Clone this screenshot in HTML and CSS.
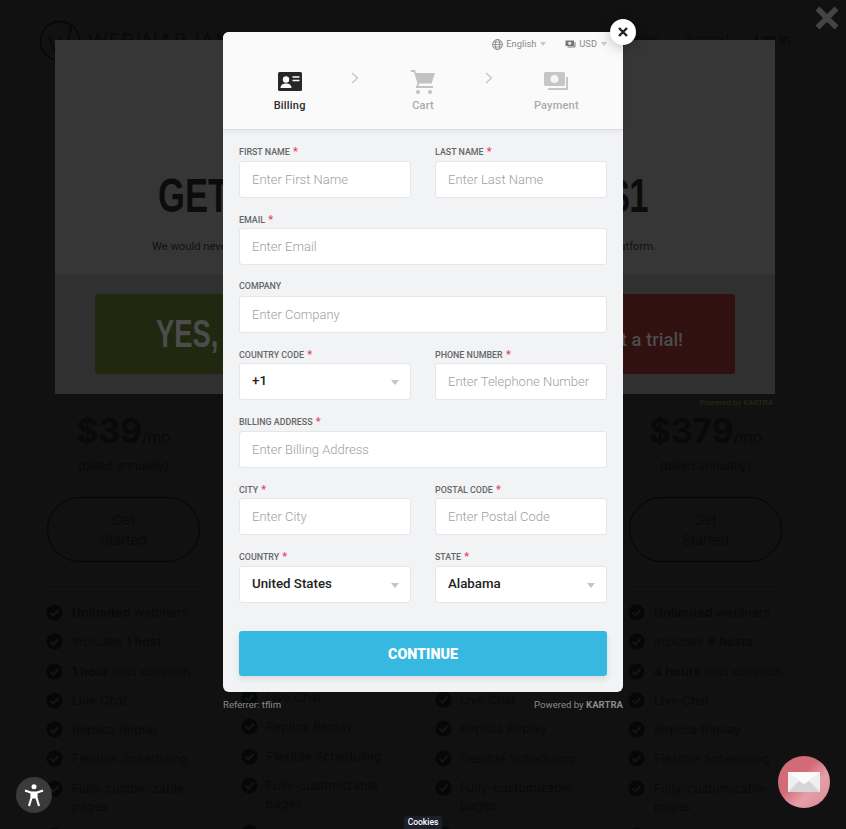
FILE: index.html
```html
<!DOCTYPE html>
<html lang="en">
<head>
  <meta charset="UTF-8" />
  <meta name="viewport" content="width=device-width, initial-scale=1.0"/>
  <title>Checkout</title>
  <link rel="stylesheet" href="styles.css">
</head>
<body>
  <svg class="defs" width="0" height="0">
    <symbol id="check" viewBox="0 0 18 18">
      <circle cx="9" cy="9" r="8.5" fill="#060806"/>
      <path d="M4.8 9.2l3 3 5.4-6" fill="none" stroke="#141614" stroke-width="2.2"/>
    </symbol>
  </svg>

  <div class="page">
    <header class="site-head">
      <svg class="site-logo" width="42" height="42" viewBox="0 0 42 42">
        <circle cx="21" cy="21" r="19.5" fill="none" stroke="#070707" stroke-width="1.6"/>
        <path d="M10 17l6 15 6-13 5 13 5-26" fill="none" stroke="#070707" stroke-width="1.6"/>
      </svg>
      <div class="site-name">WEBINAR JAM</div>
      <nav class="site-nav">
        <span>Examples</span>
        <span>Support</span>
        <b>Log in</b>
      </nav>
    </header>

    <section class="plans">
      <div class="plan plan-outer">
        <div class="price"><b>$39</b>/mo</div>
        <div class="billed">(billed annually)</div>
        <div class="get-started">Get<br>Started</div>
        <hr>
        <ul>
          <li><svg><use href="#check"/></svg><span><b>Unlimited</b> webinars</span></li>
          <li><svg><use href="#check"/></svg><span>Includes <b>1 host</b></span></li>
          <li><svg><use href="#check"/></svg><span><b>1 hour</b> max duration</span></li>
          <li><svg><use href="#check"/></svg><span>Live Chat</span></li>
          <li><svg><use href="#check"/></svg><span>Replica Replay</span></li>
          <li><svg><use href="#check"/></svg><span>Flexible Scheduling</span></li>
          <li><svg><use href="#check"/></svg><span>Fully-customizable pages</span></li>
          <li><svg><use href="#check"/></svg></li>
        </ul>
      </div>
      <div class="plan plan-covered plan-second">
        <ul>
          <li><svg><use href="#check"/></svg><span>Live Chat</span></li>
          <li><svg><use href="#check"/></svg><span>Replica Replay</span></li>
          <li><svg><use href="#check"/></svg><span>Flexible Scheduling</span></li>
          <li><svg><use href="#check"/></svg><span>Fully-customizable pages</span></li>
          <li><svg><use href="#check"/></svg></li>
        </ul>
      </div>
      <div class="plan plan-covered">
        <ul>
          <li><svg><use href="#check"/></svg><span>Live Chat</span></li>
          <li><svg><use href="#check"/></svg><span>Replica Replay</span></li>
          <li><svg><use href="#check"/></svg><span>Flexible Scheduling</span></li>
          <li><svg><use href="#check"/></svg><span>Fully-customizable pages</span></li>
          <li><svg><use href="#check"/></svg></li>
        </ul>
      </div>
      <div class="plan plan-outer">
        <div class="price"><b>$379</b>/mo</div>
        <div class="billed">(billed annually)</div>
        <div class="get-started">Get<br>Started</div>
        <hr>
        <ul>
          <li><svg><use href="#check"/></svg><span><b>Unlimited</b> webinars</span></li>
          <li><svg><use href="#check"/></svg><span>Includes <b>6 hosts</b></span></li>
          <li><svg><use href="#check"/></svg><span><b>4 hours</b> max duration</span></li>
          <li><svg><use href="#check"/></svg><span>Live Chat</span></li>
          <li><svg><use href="#check"/></svg><span>Replica Replay</span></li>
          <li><svg><use href="#check"/></svg><span>Flexible Scheduling</span></li>
          <li><svg><use href="#check"/></svg><span>Fully-customizable pages</span></li>
          <li><svg><use href="#check"/></svg></li>
        </ul>
      </div>
    </section>
  </div>

  <!-- first popup, sits behind the checkout -->
  <div class="offer">
    <div class="offer-top">
      <div class="offer-title"><span class="squeeze-left">GET</span><span class="squeeze-right">$1</span></div>
      <div class="offer-sub"><span>We would never</span><span>platform.</span></div>
    </div>
    <div class="offer-actions">
      <div class="offer-yes"><span class="squeeze-left">YES,</span></div>
      <div class="offer-no">Not a trial!</div>
    </div>
  </div>
  <div class="offer-credit">Powered by KARTRA</div>

  <svg class="page-close" width="24" height="24" viewBox="0 0 24 24">
    <path d="M2.5 2.5l19 19M21.5 2.5l-19 19" stroke="#444" stroke-width="5.5"/>
  </svg>

  <!-- checkout modal -->
  <div class="modal">
    <div class="modal-head">
      <div class="switches">
        <span class="switch">
          <svg width="11" height="11" viewBox="0 0 10 10" fill="none" stroke="#777" stroke-width="0.7">
            <circle cx="5" cy="5" r="4.5"/>
            <ellipse cx="5" cy="5" rx="2" ry="4.5"/>
            <path d="M0.5 5h9M1.2 2.8h7.6M1.2 7.2h7.6"/>
          </svg>
          English<i class="caret"></i>
        </span>
        <span class="switch">
          <svg width="11" height="8" viewBox="0 0 10 8">
            <rect x="0" y="0.5" width="8.5" height="5.5" fill="#777"/>
            <circle cx="4.2" cy="3.2" r="1.5" fill="#eee"/>
            <path d="M9.5 2v5H2" fill="none" stroke="#777"/>
          </svg>
          USD<i class="caret"></i>
        </span>
      </div>
      <div class="steps">
        <div class="step step-on">
          <svg width="24" height="20" viewBox="0 0 24 20">
            <rect width="24" height="19" rx="1.5" fill="#272727"/>
            <circle cx="8" cy="7.5" r="3.2" fill="#fafafa"/>
            <path d="M2.5 16c0-3.4 2.6-4.6 5.5-4.6s5.5 1.2 5.5 4.6z" fill="#fafafa"/>
            <path d="M14.5 5h7M14.5 8.5h7" stroke="#fafafa" stroke-width="1.6"/>
          </svg>
          <span>Billing</span>
        </div>
        <svg class="chevron" width="8" height="12" viewBox="0 0 8 12"><path d="M1 1l5.5 5L1 11" fill="none" stroke="#c4c4c4" stroke-width="1.3"/></svg>
        <div class="step">
          <svg width="24" height="24" viewBox="0 0 24 24">
            <path d="M0 0h4l1 3h19l-3.5 10.5H8.200l-1 2.500H22v2H4.500l2-4.800L3 2H0z" fill="#c2c2c2"/>
            <circle cx="7" cy="22" r="2" fill="#c2c2c2"/>
            <circle cx="19" cy="22" r="2" fill="#c2c2c2"/>
          </svg>
          <span>Cart</span>
        </div>
        <svg class="chevron" width="8" height="12" viewBox="0 0 8 12"><path d="M1 1l5.5 5L1 11" fill="none" stroke="#c4c4c4" stroke-width="1.3"/></svg>
        <div class="step">
          <svg width="24" height="20" viewBox="0 0 24 20">
            <rect width="21" height="14" rx="1.500" fill="#c6c6c6"/>
            <circle cx="10.500" cy="7" r="4" fill="#f5f5f5"/>
            <path d="M23 5v12H4" fill="none" stroke="#c6c6c6" stroke-width="2"/>
          </svg>
          <span>Payment</span>
        </div>
      </div>
    </div>

    <form class="billing-form">
      <div class="field">
        <label>First Name <em>*</em></label>
        <input type="text" placeholder="Enter First Name">
      </div>
      <div class="field">
        <label>Last Name <em>*</em></label>
        <input type="text" placeholder="Enter Last Name">
      </div>
      <div class="field field-wide">
        <label>Email <em>*</em></label>
        <input type="text" placeholder="Enter Email">
      </div>
      <div class="field field-wide">
        <label>Company</label>
        <input type="text" placeholder="Enter Company">
      </div>
      <div class="field">
        <label>Country Code <em>*</em></label>
        <div class="select">+1</div>
      </div>
      <div class="field">
        <label>Phone Number <em>*</em></label>
        <input type="text" placeholder="Enter Telephone Number">
      </div>
      <div class="field field-wide">
        <label>Billing Address <em>*</em></label>
        <input type="text" placeholder="Enter Billing Address">
      </div>
      <div class="field">
        <label>City <em>*</em></label>
        <input type="text" placeholder="Enter City">
      </div>
      <div class="field">
        <label>Postal Code <em>*</em></label>
        <input type="text" placeholder="Enter Postal Code">
      </div>
      <div class="field">
        <label>Country <em>*</em></label>
        <div class="select">United States</div>
      </div>
      <div class="field">
        <label>State <em>*</em></label>
        <div class="select">Alabama</div>
      </div>
      <button type="button" class="continue">CONTINUE</button>
    </form>

    <div class="modal-close">
      <svg width="10" height="10" viewBox="0 0 10 10"><path d="M1 1l8 8M9 1l-8 8" stroke="#222" stroke-width="2.400"/></svg>
    </div>
  </div>

  <div class="modal-foot">
    <span>Referrer: tflim</span>
    <span>Powered by <b>KARTRA</b></span>
  </div>

  <div class="a11y">
    <svg width="20" height="23" viewBox="0 0 20 23">
      <circle cx="10" cy="2.800" r="2.500" fill="#fff"/>
      <path d="M1 6.500l6.500 2.200v5L5 22M19 6.500l-6.500 2.200v5L15 22" fill="none" stroke="#fff" stroke-width="2.200"/>
      <path d="M7.500 7.500h5v7h-5z" fill="#fff"/>
    </svg>
  </div>

  <div class="mail">
    <svg width="32" height="20" viewBox="0 0 32 20">
      <rect width="32" height="20" fill="#efefef"/>
      <path d="M0 20l11-11 5 3 5-3 11 11z" fill="#d6d6d6"/>
      <path d="M0 0l16 12L32 0z" fill="#fafafa"/>
    </svg>
  </div>

  <div class="cookies">Cookies</div>
</body>
</html>
```

FILE: styles.css
```css
* {
  box-sizing: border-box;
}

html, body {
  height: 100%;
}

body {
  margin: 0;
  overflow: hidden;
  background-color: #111;
  font-family: Roboto, Arial, sans-serif;
}

.defs {
  display: block;
}

/* dimmed page behind the popups */
.page {
  height: 829px;
  overflow: hidden;
  color: #090909;
  font-family: Inter, Arial, sans-serif;
}

.site-head {
  display: flex;
  align-items: flex-start;
  height: 408px;
  padding: 20px 56px 0 39px;
}

.site-name {
  margin: 3px 0 0 7px;
  font-family: "Open Sans", Arial, sans-serif;
  font-size: 21px;
  line-height: 36px;
  letter-spacing: 1px;
}

.site-nav {
  display: flex;
  gap: 25px;
  margin-left: auto;
  padding-top: 11px;
  font-size: 12px;
}

.plans {
  display: grid;
  grid-template-columns: repeat(4, 153px);
  column-gap: 41px;
  padding-left: 47px;
}

.plan-covered {
  padding-top: 283px;
}

.plan-second {
  padding-top: 281px;
}

.price {
  height: 46px;
  text-align: center;
  font-size: 15.5px;
}

.price b {
  font-size: 33.5px;
  line-height: 46px;
}

.billed {
  margin-top: 3px;
  text-align: center;
  font-size: 12.2px;
  line-height: 18px;
}

.get-started {
  height: 65px;
  margin-top: 22px;
  padding-top: 12px;
  border: 1px solid #050505;
  border-radius: 33px;
  text-align: center;
  font-size: 13.5px;
  line-height: 20px;
}

hr {
  height: 1px;
  margin: 24px 0 17px;
  border: 0;
  background-color: #0d0d0d;
}

ul {
  margin: 0 -10px 0 0;
  padding: 0;
  list-style: none;
  font-size: 12px;
  line-height: 18px;
  letter-spacing: 0.3px;
}

li {
  display: flex;
  gap: 8px;
  padding-bottom: 11.3px;
}

li svg {
  flex: none;
  width: 17px;
  height: 17px;
}

.plan-outer li svg {
  margin-left: -1px;
  margin-right: 1px;
}

li b {
  font-weight: 700;
}

/* popup behind the checkout */
.offer {
  position: absolute;
  left: 55px;
  top: 40px;
  width: 720px;
  height: 354px;
  background-color: #363636;
}

.offer-top {
  height: 234px;
  padding-top: 131px;
}

.offer-title {
  display: flex;
  justify-content: space-between;
  padding: 0 127px 0 103px;
  color: #0c0c0c;
  font-family: "Liberation Sans", Arial, sans-serif;
  font-size: 48px;
  font-weight: 700;
  line-height: 50px;
}

/* no condensed face installed, so the big headings get squeezed */
.squeeze-left,
.squeeze-right {
  display: inline-block;
  transform: scaleX(0.72);
}

.squeeze-left {
  transform-origin: left center;
}

.squeeze-right {
  transform-origin: right center;
}

.offer-sub {
  display: flex;
  justify-content: space-between;
  margin-top: 18px;
  padding: 0 119px 0 97px;
  color: #111;
  font-size: 11.2px;
  line-height: 16px;
}

.offer-actions {
  display: flex;
  justify-content: space-between;
  height: 120px;
  padding: 20px 40px;
  background-color: #303030;
}

.offer-yes {
  width: 300px;
  padding-left: 61px;
  border-radius: 3px;
  background-color: #20290f;
  color: #4c4c4c;
  font-family: "Liberation Sans", Arial, sans-serif;
  font-size: 38px;
  font-weight: 700;
  line-height: 80px;
}

.offer-no {
  width: 300px;
  padding: 6px 52px 0 0;
  border-radius: 3px;
  background-color: #30110f;
  color: #4c4c4c;
  text-align: right;
  font-size: 18.5px;
  font-weight: 500;
  line-height: 80px;
}

.offer-credit {
  position: absolute;
  right: 73px;
  top: 397px;
  color: #24320f;
  font-size: 8px;
  line-height: 11px;
}

.page-close {
  position: absolute;
  left: 815px;
  top: 6px;
}

/* checkout modal */
.modal {
  position: absolute;
  left: 223px;
  top: 32px;
  width: 400px;
  height: 660px;
  border-radius: 6px;
  background-color: #f2f3f5;
}

.modal-head {
  height: 98px;
  padding-top: 5px;
  border-radius: 6px 6px 0 0;
  border-bottom: 1px solid #ddd;
  background-color: #fafafa;
  box-shadow: 0 2px 6px rgba(0, 0, 0, 0.06);
}

.switches {
  display: flex;
  justify-content: flex-end;
  gap: 19px;
  padding-right: 16px;
  color: #888;
  font-size: 9.3px;
  line-height: 14px;
}

.switch {
  display: flex;
  align-items: center;
  gap: 3px;
}

.caret {
  width: 0;
  height: 0;
  margin-left: 1px;
  border-left: 3.5px solid transparent;
  border-right: 3.5px solid transparent;
  border-top: 4px solid #c8c8c8;
}

.steps {
  display: flex;
  margin-top: 19px;
}

.step {
  display: flex;
  flex: 1;
  flex-direction: column;
  align-items: center;
  height: 45px;
  color: #aaa;
  font-size: 11px;
  font-weight: 500;
  letter-spacing: 0.2px;
}

.step svg {
  height: 24px;
  margin-bottom: 5px;
}

.step-on {
  color: #2b2b2b;
}

.chevron {
  flex: none;
  margin: 2px -4px 0;
  transform: translateX(-1px);
}

.billing-form {
  display: grid;
  grid-template-columns: 172px 172px;
  column-gap: 24px;
  row-gap: 14.5px;
  padding: 14.9px 16px 0;
}

.field-wide {
  grid-column: span 2;
}

.field label {
  display: block;
  height: 16px;
  padding-top: 0.2px;
  color: #666;
  font-size: 8.9px;
  font-weight: 500;
  line-height: 13px;
  text-transform: uppercase;
}

.field em {
  margin-left: 1px;
  color: #e0435a;
  font-size: 11px;
  font-style: normal;
}

.field input,
.select {
  display: block;
  width: 100%;
  height: 37px;
  padding: 0 12px;
  border: 1px solid #e4e6e9;
  border-radius: 3px;
  background-color: #fff;
  font-family: Roboto, Arial, sans-serif;
  font-size: 13px;
  font-weight: 300;
  outline: none;
}

.field input::placeholder {
  color: #a0a0a0;
  opacity: 1;
}

.select {
  position: relative;
  color: #222;
  font-size: 13.3px;
  font-weight: 500;
  line-height: 33px;
}

.select::after {
  content: "";
  position: absolute;
  right: 11px;
  top: 16px;
  border-left: 4px solid transparent;
  border-right: 4px solid transparent;
  border-top: 5px solid #c4c4c4;
}

.continue {
  grid-column: span 2;
  height: 45px;
  margin-top: 14px;
  border: 0;
  border-radius: 3px;
  background-color: #37b8e0;
  box-shadow: 0 3px 6px rgba(0, 0, 0, 0.1);
  color: #fff;
  font-family: Roboto, Arial, sans-serif;
  font-size: 14.3px;
  font-weight: 900;
}

.modal-close {
  position: absolute;
  left: 387px;
  top: -13px;
  display: flex;
  align-items: center;
  justify-content: center;
  width: 26px;
  height: 26px;
  border-radius: 50%;
  background-color: #fff;
  box-shadow: 0 2px 14px rgba(0, 0, 0, 0.25);
}

.modal-foot {
  position: absolute;
  left: 223px;
  top: 698px;
  display: flex;
  justify-content: space-between;
  width: 400px;
  color: #8a8a8a;
  font-size: 9.6px;
  line-height: 13px;
}

.a11y {
  position: absolute;
  left: 16px;
  top: 777px;
  display: flex;
  align-items: center;
  justify-content: center;
  width: 36px;
  height: 36px;
  border-radius: 50%;
  background-color: #3a3a3a;
}

.mail {
  position: absolute;
  left: 778px;
  top: 756px;
  display: flex;
  align-items: center;
  justify-content: center;
  width: 52px;
  height: 52px;
  border-radius: 50%;
  background: linear-gradient(135deg, #d26a77 40%, #e6a0a8 65%, #d98791);
}

.cookies {
  position: absolute;
  left: 404px;
  top: 816px;
  width: 38px;
  height: 13px;
  border-radius: 3px 3px 0 0;
  background-color: #1c1f2b;
  color: #fff;
  text-align: center;
  font-size: 8.5px;
  font-weight: 500;
  line-height: 13px;
}
```
